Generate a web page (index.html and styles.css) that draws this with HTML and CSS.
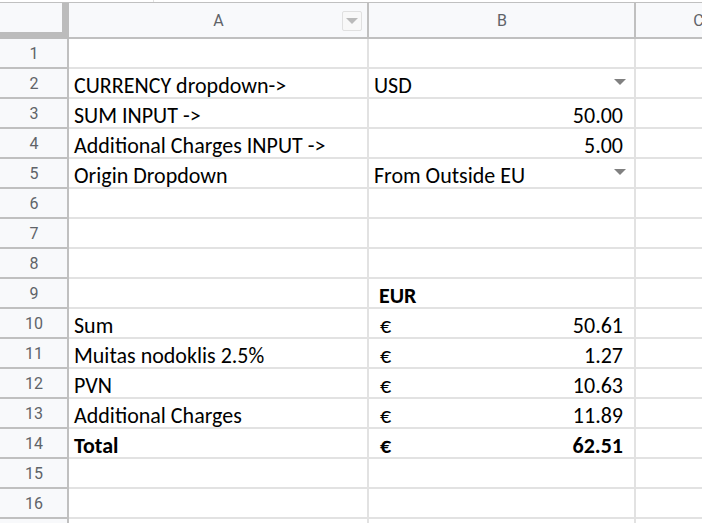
FILE: index.html
```html
<!doctype html>
<html lang="en">
  <head>
    <meta charset="utf-8">
    <meta name="viewport" content="width=device-width, initial-scale=1">
    <title>Import calculator</title>
    <link rel="stylesheet" href="styles.css">
  </head>
  <body>
    <div class="formula-bar"><div class="name-box"></div></div>
    <div class="grid-view">
    <table class="sheet">
      <colgroup>
        <col class="col-num">
        <col class="col-a">
        <col class="col-b">
        <col class="col-c">
      </colgroup>
      <thead>
        <tr>
          <td class="corner"></td>
          <th scope="col">
            <div class="col-head">
              <span>A</span>
              <button class="col-menu" type="button" aria-label="Column A menu">
                <svg width="12" height="6" viewBox="0 0 12 6"><path d="M0 0h12L6 6z"/></svg>
              </button>
            </div>
          </th>
          <th scope="col">B</th>
          <th scope="col">C</th>
        </tr>
      </thead>
      <tbody>
        <tr><th scope="row">1</th><td></td><td></td><td></td></tr>
        <tr>
          <th scope="row">2</th>
          <td><label for="currency">CURRENCY dropdown-&gt;</label></td>
          <td>
            <div class="dropdown">
              <select id="currency"><option>USD</option><option>EUR</option></select>
              <svg width="12" height="6" viewBox="0 0 12 6"><path d="M0 0h12L6 6z"/></svg>
            </div>
          </td>
          <td></td>
        </tr>
        <tr><th scope="row">3</th><td>SUM INPUT -&gt;</td><td class="num">50.00</td><td></td></tr>
        <tr><th scope="row">4</th><td>Additional Charges INPUT -&gt;</td><td class="num">5.00</td><td></td></tr>
        <tr>
          <th scope="row">5</th>
          <td><label for="origin">Origin Dropdown</label></td>
          <td>
            <div class="dropdown">
              <select id="origin"><option>From Outside EU</option><option>From EU</option></select>
              <svg width="12" height="6" viewBox="0 0 12 6"><path d="M0 0h12L6 6z"/></svg>
            </div>
          </td>
          <td></td>
        </tr>
        <tr><th scope="row">6</th><td></td><td></td><td></td></tr>
        <tr><th scope="row">7</th><td></td><td></td><td></td></tr>
        <tr><th scope="row">8</th><td></td><td></td><td></td></tr>
        <tr><th scope="row">9</th><td></td><td class="unit">EUR</td><td></td></tr>
        <tr><th scope="row">10</th><td>Sum</td><td><div class="money"><span>€</span><span>50.61</span></div></td><td></td></tr>
        <tr><th scope="row">11</th><td>Muitas nodoklis 2.5%</td><td><div class="money"><span>€</span><span>1.27</span></div></td><td></td></tr>
        <tr><th scope="row">12</th><td>PVN</td><td><div class="money"><span>€</span><span>10.63</span></div></td><td></td></tr>
        <tr><th scope="row">13</th><td>Additional Charges</td><td><div class="money"><span>€</span><span>11.89</span></div></td><td></td></tr>
        <tr class="total"><th scope="row">14</th><td>Total</td><td><div class="money"><span>€</span><span>62.51</span></div></td><td></td></tr>
        <tr><th scope="row">15</th><td></td><td></td><td></td></tr>
        <tr><th scope="row">16</th><td></td><td></td><td></td></tr>
        <tr><th scope="row"></th><td></td><td></td><td></td></tr>
      </tbody>
    </table>
    </div>
  </body>
</html>
```

FILE: styles.css
```css
* { box-sizing: border-box; }
html, body { margin: 0; padding: 0; height: 100%; overflow: hidden; }
body {
  background: #fff;
  color: #000;
  font-family: Carlito, Calibri, Lato, sans-serif;
  font-size: 22px;
}

.formula-bar {
  height: 3px;
  border-bottom: 1px solid #c0c0c0;
}
.name-box {
  width: 154px;
  height: 2px;
  border-right: 1px solid #e2e2e2;
}

.grid-view { overflow: hidden; }
.sheet {
  width: 762px;
  table-layout: fixed;
  border-collapse: separate;
  border-spacing: 0;
}
.col-num { width: 69px; }
.col-a { width: 300px; }
.col-b { width: 267px; }
.col-c { width: 126px; }

.sheet th {
  padding: 2px 0 0 1px;
  background: #f8f9fb;
  border: solid #c0c0c0;
  border-width: 0 2px 2px 0;
  color: #5f6368;
  font: 16px/24px Roboto, sans-serif;
  text-align: center;
}
.sheet thead th { height: 36px; }
.sheet tbody th { height: 30px; }
.sheet .corner {
  background: #f8f9fb;
  border: solid #bcbcbc;
  border-width: 0 7px 7px 0;
}

.col-head {
  display: grid;
  grid-template-columns: 1fr auto 1fr;
  align-items: center;
  padding: 0 5px;
}
.col-head span { grid-column: 2; }
.col-menu {
  display: flex;
  align-items: center;
  justify-content: center;
  justify-self: end;
  width: 20px;
  height: 20px;
  padding: 0;
  background: #f8f8f8;
  border: 1px solid #e0e0e0;
  border-radius: 2px;
}
.col-menu svg { fill: #bababa; }

/* cells */
.sheet td {
  height: 30px;
  padding: 6px 4px 0 5px;
  border: solid #e2e2e2;
  border-width: 0 2px 2px 0;
  line-height: 22px;
  white-space: nowrap;
}
.sheet .num {
  padding-right: 11px;
  text-align: right;
}
.sheet .unit {
  padding-left: 10px;
  font-weight: bold;
}
.money {
  display: flex;
  justify-content: space-between;
  padding: 0 7px 0 6px;
}
.total td { font-weight: bold; }

.dropdown {
  display: flex;
  align-items: center;
  height: 22px;
  padding-right: 4px;
}
.dropdown select {
  flex: 1;
  height: 22px;
  padding: 0;
  appearance: none;
  background: none;
  border: 0;
  color: inherit;
  font: inherit;
}
.dropdown svg {
  margin-bottom: 8px;
  fill: #808080;
}
```
